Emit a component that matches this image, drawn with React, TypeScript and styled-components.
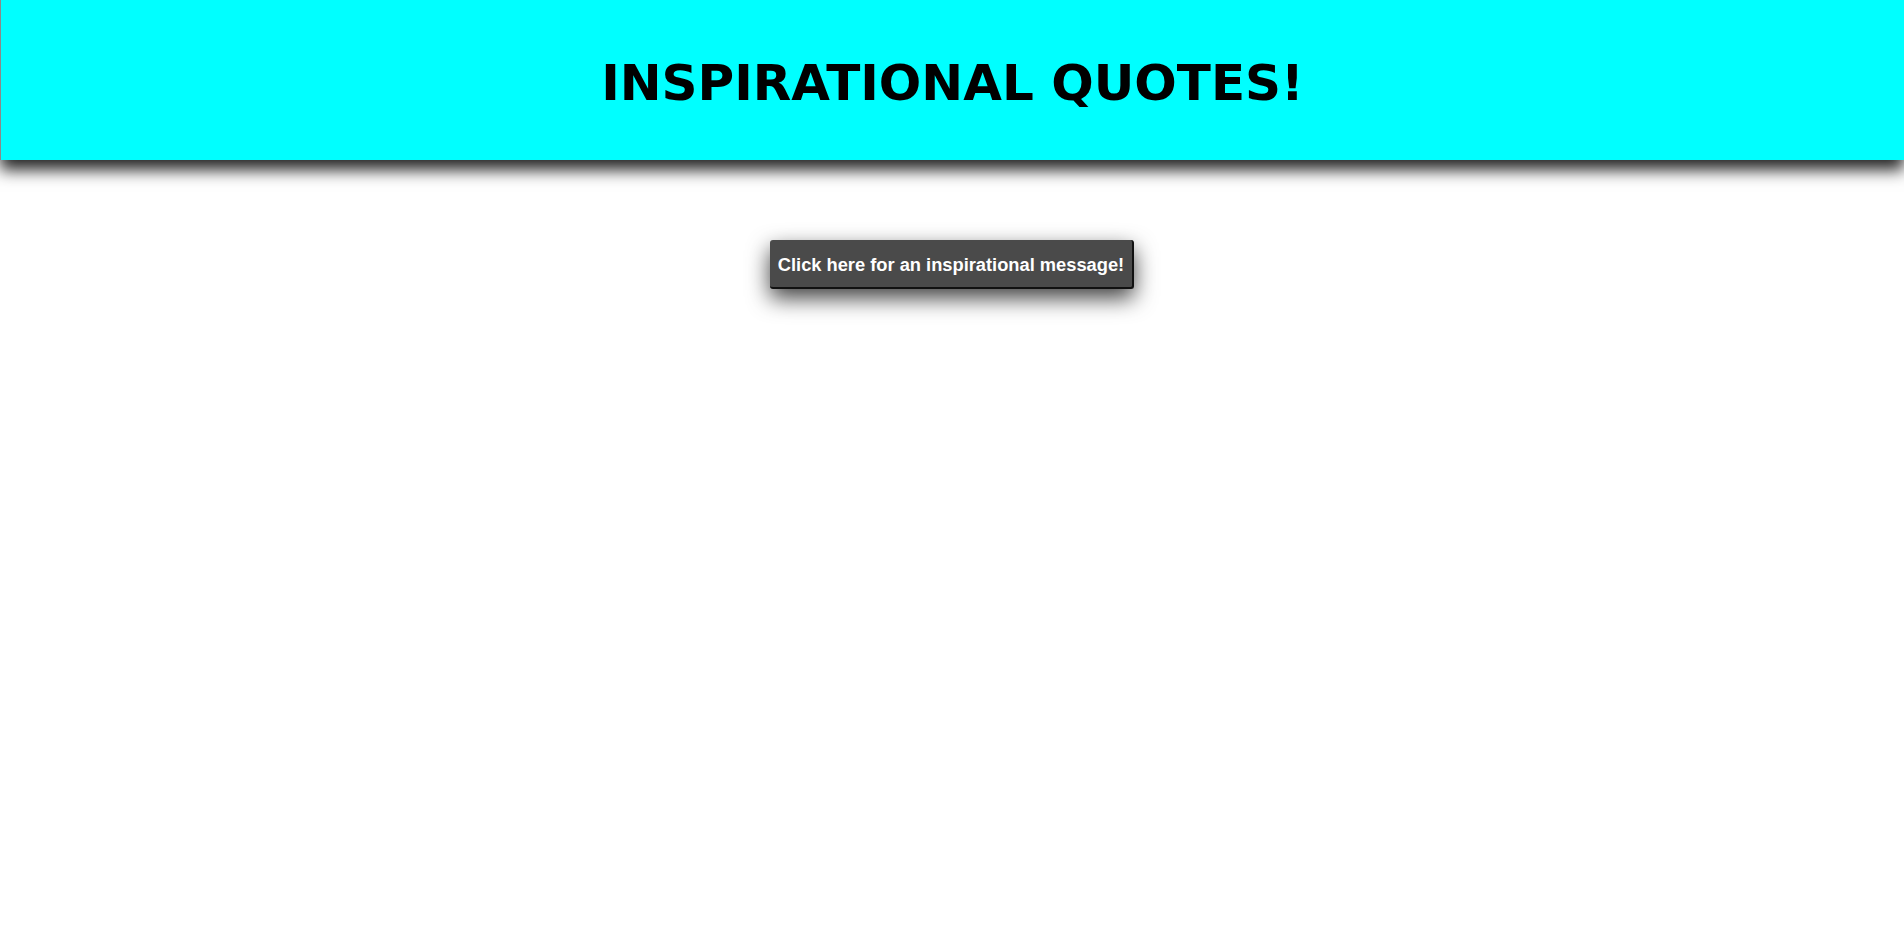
import React from "react";
import styled, { createGlobalStyle } from "styled-components";

const Global = createGlobalStyle`
  html, body { margin: 0; padding: 0; background: #ffffff; }
  body { font-family: "DejaVu Sans", Verdana, sans-serif; }
  #root { min-height: 100vh; }
`;

const Header = styled.header`
  height: 160px;
  background: #00ffff;
  border-left: 1px solid #8a8a8a;
  box-shadow: 0 10px 15px rgba(0, 0, 0, 0.85);
  display: flex;
  align-items: flex-start;
  justify-content: center;
  box-sizing: border-box;
  padding-top: 54px;
`;

const Title = styled.h1`
  margin: 0;
  font-family: "DejaVu Sans", Verdana, sans-serif;
  font-weight: bold;
  font-size: 50px;
  line-height: 58px;
  color: #000000;
`;

const Main = styled.main`
  display: flex;
  justify-content: center;
  padding-top: 80px;
`;

const QuoteButton = styled.button`
  font-family: "Liberation Sans", Arial, sans-serif;
  font-weight: bold;
  font-size: 18.3px;
  line-height: 21px;
  color: #ffffff;
  background: #4a4a4a;
  border: none;
  border-right: 2px solid #111;
  border-bottom: 2px solid #111;
  border-radius: 3px;
  padding: 14px 8px 12px 8px;
  box-shadow: 0 9px 22px rgba(0, 0, 0, 0.75);
  cursor: pointer;
`;

export default function App() {
  return (
    <>
      <Global />
      <Header>
        <Title>INSPIRATIONAL QUOTES!</Title>
      </Header>
      <Main>
        <QuoteButton>Click here for an inspirational message!</QuoteButton>
      </Main>
    </>
  );
}
